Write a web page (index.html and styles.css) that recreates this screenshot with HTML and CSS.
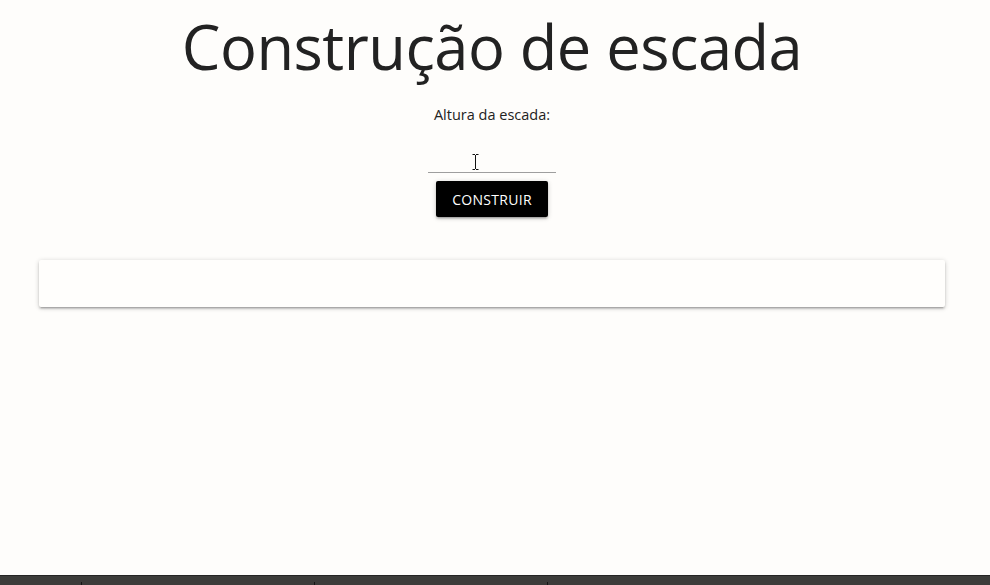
FILE: index.html
```html
<!DOCTYPE html>
<html lang="pt">
<head>
<meta charset="utf-8">
<title>Construção de escada</title>
<link rel="stylesheet" href="styles.css">
</head>
<body>
<div class="page">
  <main class="content">
    <h1 class="title">Construção de escada</h1>
    <form class="form">
      <label class="label" for="altura">Altura da escada:</label>
      <div class="field">
        <input class="input" id="altura" type="text">
        <svg class="cursor" width="7" height="16" viewBox="0 0 7 16"><path d="M0.5 0.5h2.5M4 0.5h2.5M3.5 1v14M0.5 15.5h2.5M4 15.5h2.5" stroke="#111" stroke-width="1" fill="none"/></svg>
      </div>
      <button class="btn" type="button">Construir</button>
    </form>
    <div class="card"></div>
  </main>
  <footer class="taskbar">
    <span class="tick"></span>
    <span class="tick"></span>
    <span class="tick"></span>
  </footer>
</div>
</body>
</html>
```
FILE: styles.css
```css
* { box-sizing: border-box; }
html, body { margin: 0; padding: 0; }
body {
  background: #fefdfb;
  font-family: "Open Sans", "Noto Sans", sans-serif;
  color: #222;
}
.page {
  height: 100vh;
  display: flex;
  flex-direction: column;
}
.content {
  flex: 1;
  display: flex;
  flex-direction: column;
  align-items: center;
  padding-right: 6px;
}
.title {
  margin: 8px 0 0;
  font-weight: 400;
  font-size: 61.4px;
  line-height: 76px;
  color: #222;
  letter-spacing: -0.5px;
}
.form {
  display: flex;
  flex-direction: column;
  align-items: center;
  margin-top: 21px;
}
.label {
  font-size: 14.5px;
  line-height: 20px;
  color: #222;
}
.field {
  position: relative;
  margin-top: 18px;
}
.input {
  display: block;
  width: 128px;
  height: 30px;
  border: none;
  border-bottom: 1px solid #9e9e9e;
  background: transparent;
  outline: none;
}
.cursor {
  position: absolute;
  left: 44px;
  top: 11px;
}
.btn {
  margin-top: 8px;
  width: 112px;
  height: 36px;
  background: #000;
  color: #fff;
  border: none;
  border-radius: 2px;
  font-family: inherit;
  font-size: 14px;
  text-transform: uppercase;
  letter-spacing: 0.3px;
  box-shadow: 0 2px 2px 0 rgba(0,0,0,.14), 0 3px 1px -2px rgba(0,0,0,.12), 0 1px 5px 0 rgba(0,0,0,.2);
}
.card {
  align-self: stretch;
  margin: 43px 39px 0 39px;
  height: 47px;
  background: #fffefc;
  border-radius: 2px;
  box-shadow: 0 2px 2px 0 rgba(0,0,0,.14), 0 3px 1px -2px rgba(0,0,0,.12), 0 1px 5px 0 rgba(0,0,0,.2);
}
.taskbar {
  height: 10px;
  background: #3c3c3a;
  border-top: 1px solid #242424;
  display: flex;
  align-items: flex-end;
  position: relative;
}
.tick {
  width: 1px;
  height: 3px;
  background: #151515;
  margin-left: 81px;
}
.tick + .tick { margin-left: 232px; }
```
